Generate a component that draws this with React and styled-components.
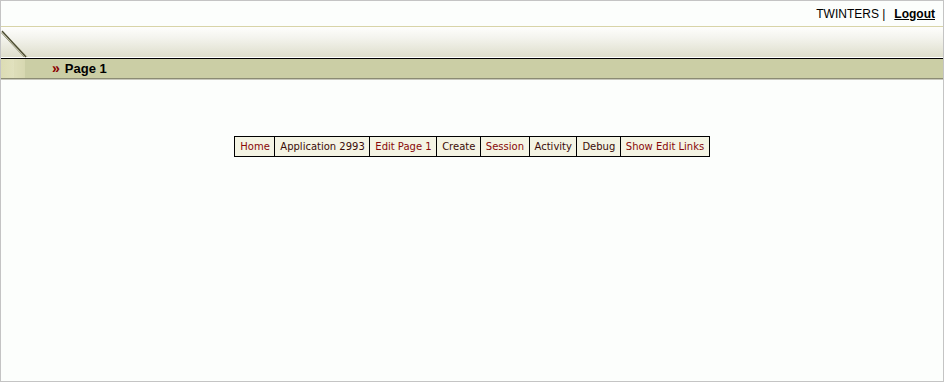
import React from "react";
import styled, { createGlobalStyle } from "styled-components";

const Global = createGlobalStyle`
  html, body { margin: 0; padding: 0; background: #fcfefc; }
  body { font-family: "Liberation Sans", Arial, sans-serif; }
`;

const Frame = styled.div`
  width: 944px;
  height: 382px;
  box-sizing: border-box;
  border: 1px solid #c4c4c4;
  background: #fcfefc;
  display: flex;
  flex-direction: column;
`;

const TopBar = styled.div`
  height: 25px;
  display: flex;
  justify-content: flex-end;
  align-items: center;
  padding-right: 8px;
  font-size: 12px;
  color: #000;
`;

const UserName = styled.span`
  margin-right: 9px;
`;

const Logout = styled.a`
  font-weight: bold;
  color: #000;
  text-decoration: underline;
`;

const Header = styled.div`
  position: relative;
  border-top: 1px solid #d8d4a8;
`;

const Gloss = styled.div`
  height: 30px;
  background: linear-gradient(#fefefc 0%, #f4f4ee 35%, #dedecc 100%);
  border-bottom: 1px solid #ffffff;
`;

const Band = styled.div`
  height: 19px;
  border-top: 1px solid #000;
  background: #cbcea5;
  display: flex;
  align-items: center;
  padding-left: 51px;
  box-shadow: 0 1px 0 #8c8c74, 0 2px 0 #c8c8bc;
`;

const Arrow = styled.span`
  color: #8a0000;
  font-weight: bold;
  font-size: 14px;
  margin-right: 5px;
  line-height: 1;
  position: relative;
  top: -1px;
`;

const Title = styled.span`
  font-weight: bold;
  font-size: 13px;
  color: #000;
`;

const Corner = styled.svg`
  position: absolute;
  left: 0;
  top: 0;
`;

const Content = styled.div`
  flex: 1;
  display: flex;
  justify-content: center;
  padding-top: 58px;
`;

const NavTable = styled.div`
  display: flex;
  height: 21px;
  box-sizing: border-box;
  border: 1px solid #000;
  background: #f4f4e4;
  align-self: flex-start;
`;

const NavItem = styled.a`
  display: flex;
  align-items: center;
  padding: 0 4.5px 0 5px;
  font-family: "DejaVu Sans", Verdana, sans-serif;
  font-size: 10px;
  color: ${(p) => (p.$dark ? "#3a0c08" : "#880808")};
  text-decoration: none;
  & + & { border-left: 1px solid #000; }
`;

const items = [
  ["Home", false],
  ["Application 2993", true],
  ["Edit Page 1", false],
  ["Create", true],
  ["Session", false],
  ["Activity", true],
  ["Debug", true],
  ["Show Edit Links", false],
];

export default function App() {
  return (
    <>
      <Global />
      <Frame>
        <TopBar>
          <UserName>TWINTERS |</UserName>
          <Logout href="#">Logout</Logout>
        </TopBar>
        <Header>
          <Gloss />
          <Band>
            <Arrow>»</Arrow>
            <Title>Page 1</Title>
          </Band>
          <Corner width="30" height="52" viewBox="0 0 30 52">
            <defs>
              <linearGradient id="seg" x1="0" x2="1" y1="0" y2="0">
                <stop offset="0" stopColor="#dcdcb4" />
                <stop offset="0.6" stopColor="#e2e2c0" />
                <stop offset="1" stopColor="#d2d4ac" />
              </linearGradient>
            </defs>
            <rect x="0" y="32" width="24" height="19" fill="url(#seg)" />
            <rect x="13" y="32" width="11" height="19" fill="#dadab4" opacity="0.6" />
            <path d="M0 5 L24 30 L27 30 L2 5 Z" fill="#b8b898" opacity="0.6" />
            <path d="M1 4 L25 30" stroke="#4a4a30" strokeWidth="1.3" />
            <path d="M0 5.5 L23 30" stroke="#9c9c80" strokeWidth="1" />
          </Corner>
        </Header>
        <Content>
          <NavTable>
            {items.map(([t, d]) => (
              <NavItem key={t} href="#" $dark={d}>
                {t}
              </NavItem>
            ))}
          </NavTable>
        </Content>
      </Frame>
    </>
  );
}
